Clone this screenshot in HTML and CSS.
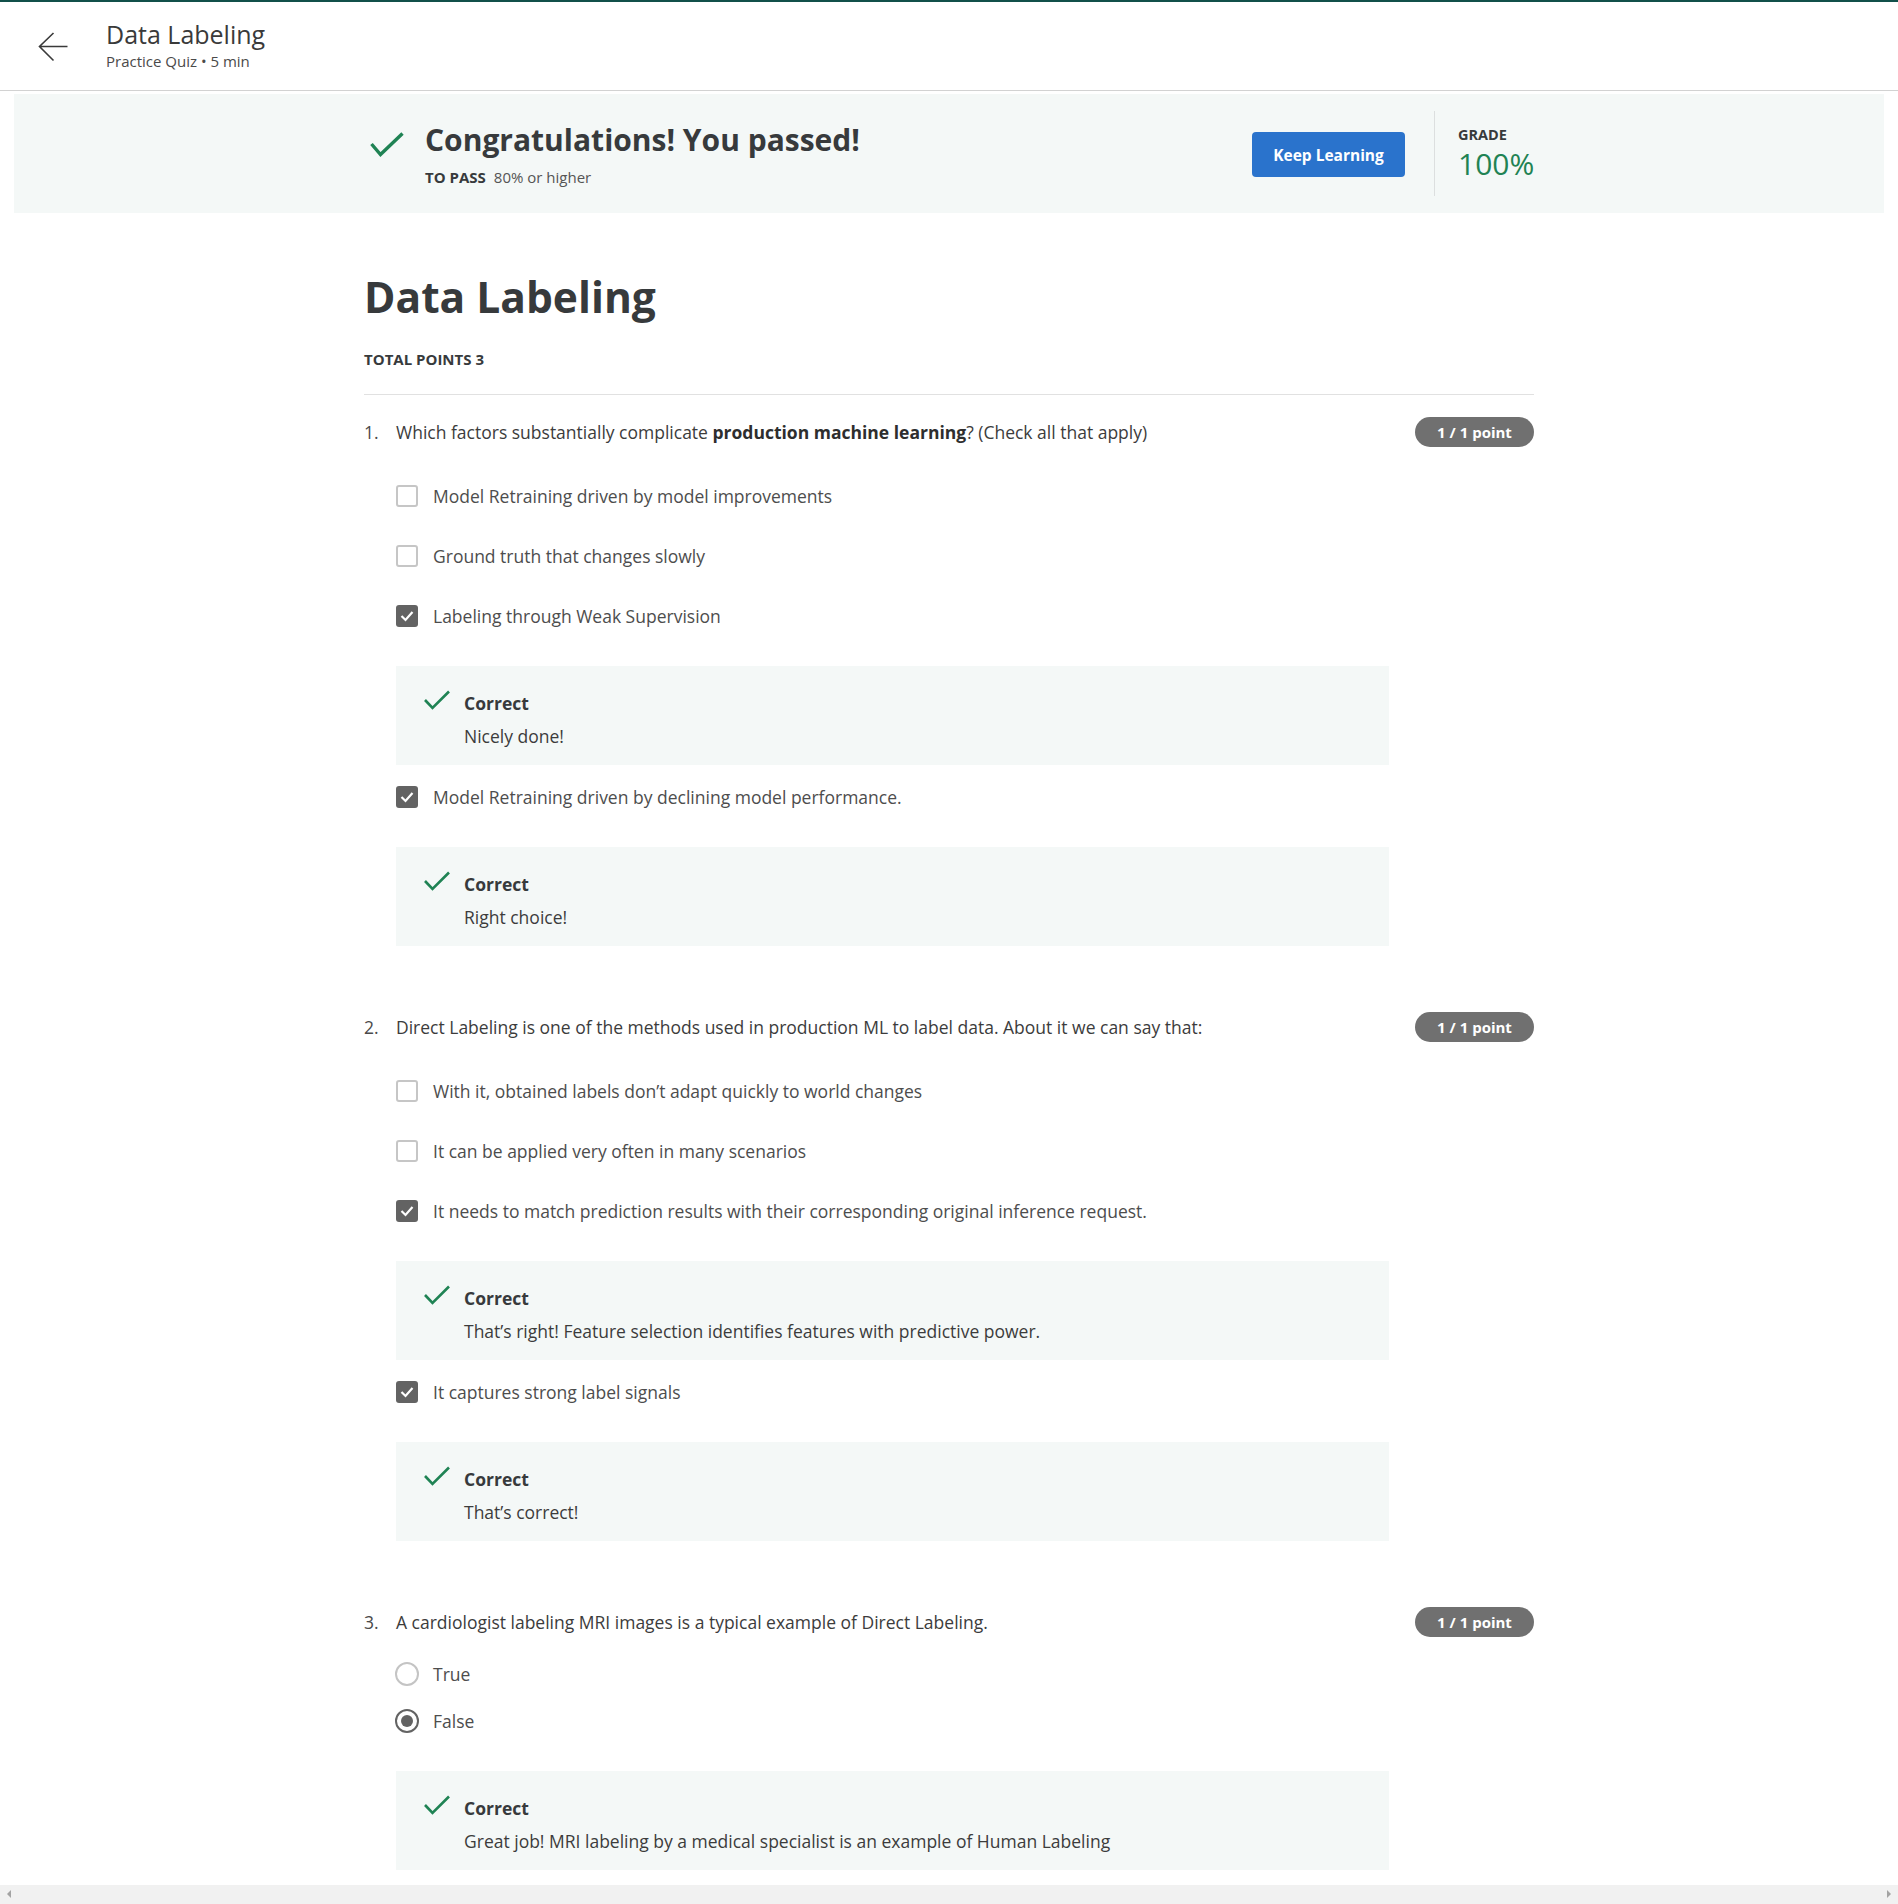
FILE: index.html
```html
<!DOCTYPE html>
<html lang="en">
<head>
<meta charset="utf-8">
<title>Data Labeling</title>
<link rel="stylesheet" href="styles.css">
</head>
<body>
<div class="topline"></div>
<header class="header">
  <svg class="back" width="30" height="30" viewBox="0 0 30 30"><path d="M29.5 14.5H1.5M15.5 1L1.5 14.5L15.5 28.5" fill="none" stroke="#3a3a3a" stroke-width="1.6"/></svg>
  <div class="hdr-text">
    <div class="hdr-title">Data Labeling</div>
    <div class="hdr-sub">Practice Quiz • 5 min</div>
  </div>
</header>

<section class="banner">
  <div class="banner-inner">
    <div class="pass">
      <svg class="pass-check" width="34" height="25" viewBox="0 0 34 25"><polyline points="1.5,12 10.5,22.5 32.5,1.5" fill="none" stroke="#1f8354" stroke-width="3.4"/></svg>
      <div>
        <div class="pass-title">Congratulations! You passed!</div>
        <div class="pass-sub"><b>TO PASS</b><span>80% or higher</span></div>
      </div>
    </div>
    <button class="keep">Keep Learning</button>
    <div class="vdiv"></div>
    <div class="grade">
      <div class="grade-label">GRADE</div>
      <div class="grade-val">100%</div>
    </div>
  </div>
</section>

<main class="quiz">
  <h1 class="quiz-title">Data Labeling</h1>
  <div class="total">TOTAL POINTS 3</div>

  <div class="questions">
    <div class="question">
      <div class="q-head">
        <div class="q-num">1.</div>
        <div class="q-text">Which factors substantially complicate <b>production machine learning</b>? (Check all that apply)</div>
        <div class="pill">1 / 1 point</div>
      </div>
      <div class="q-body checks">
        <div class="option"><span class="cb"></span><span class="opt-text">Model Retraining driven by model improvements</span></div>
        <div class="option"><span class="cb"></span><span class="opt-text">Ground truth that changes slowly</span></div>
        <div class="option"><span class="cb on"><svg width="22" height="22" viewBox="0 0 22 22"><polyline points="5.5,11 9.5,15 16.5,7" fill="none" stroke="#fff" stroke-width="2.2"/></svg></span><span class="opt-text">Labeling through Weak Supervision</span></div>
        <div class="feedback">
          <svg class="fb-check" width="26" height="20" viewBox="0 0 26 20"><polyline points="1,10 8.5,18 25,1.5" fill="none" stroke="#1f8354" stroke-width="2.6"/></svg>
          <div><div class="fb-title">Correct</div><div class="fb-text">Nicely done!</div></div>
        </div>
        <div class="option"><span class="cb on"><svg width="22" height="22" viewBox="0 0 22 22"><polyline points="5.5,11 9.5,15 16.5,7" fill="none" stroke="#fff" stroke-width="2.2"/></svg></span><span class="opt-text">Model Retraining driven by declining model performance.</span></div>
        <div class="feedback">
          <svg class="fb-check" width="26" height="20" viewBox="0 0 26 20"><polyline points="1,10 8.5,18 25,1.5" fill="none" stroke="#1f8354" stroke-width="2.6"/></svg>
          <div><div class="fb-title">Correct</div><div class="fb-text">Right choice!</div></div>
        </div>
      </div>
    </div>

    <div class="question">
      <div class="q-head">
        <div class="q-num">2.</div>
        <div class="q-text">Direct Labeling is one of the methods used in production ML to label data. About it we can say that:</div>
        <div class="pill">1 / 1 point</div>
      </div>
      <div class="q-body checks">
        <div class="option"><span class="cb"></span><span class="opt-text">With it, obtained labels don’t adapt quickly to world changes</span></div>
        <div class="option"><span class="cb"></span><span class="opt-text">It can be applied very often in many scenarios</span></div>
        <div class="option"><span class="cb on"><svg width="22" height="22" viewBox="0 0 22 22"><polyline points="5.5,11 9.5,15 16.5,7" fill="none" stroke="#fff" stroke-width="2.2"/></svg></span><span class="opt-text">It needs to match prediction results with their corresponding original inference request.</span></div>
        <div class="feedback">
          <svg class="fb-check" width="26" height="20" viewBox="0 0 26 20"><polyline points="1,10 8.5,18 25,1.5" fill="none" stroke="#1f8354" stroke-width="2.6"/></svg>
          <div><div class="fb-title">Correct</div><div class="fb-text">That’s right! Feature selection identifies features with predictive power.</div></div>
        </div>
        <div class="option"><span class="cb on"><svg width="22" height="22" viewBox="0 0 22 22"><polyline points="5.5,11 9.5,15 16.5,7" fill="none" stroke="#fff" stroke-width="2.2"/></svg></span><span class="opt-text">It captures strong label signals</span></div>
        <div class="feedback">
          <svg class="fb-check" width="26" height="20" viewBox="0 0 26 20"><polyline points="1,10 8.5,18 25,1.5" fill="none" stroke="#1f8354" stroke-width="2.6"/></svg>
          <div><div class="fb-title">Correct</div><div class="fb-text">That’s correct!</div></div>
        </div>
      </div>
    </div>

    <div class="question last">
      <div class="q-head">
        <div class="q-num">3.</div>
        <div class="q-text">A cardiologist labeling MRI images is a typical example of Direct Labeling.</div>
        <div class="pill">1 / 1 point</div>
      </div>
      <div class="q-body radios">
        <div class="option"><span class="rb"></span><span class="opt-text">True</span></div>
        <div class="option"><span class="rb on"></span><span class="opt-text">False</span></div>
        <div class="feedback">
          <svg class="fb-check" width="26" height="20" viewBox="0 0 26 20"><polyline points="1,10 8.5,18 25,1.5" fill="none" stroke="#1f8354" stroke-width="2.6"/></svg>
          <div><div class="fb-title">Correct</div><div class="fb-text">Great job! MRI labeling by a medical specialist is an example of Human Labeling</div></div>
        </div>
      </div>
    </div>
  </div>
</main>

<div class="hscroll"><span class="arr left"></span><span class="arr right"></span></div>
</body>
</html>
```

FILE: styles.css
```css
* { box-sizing: border-box; }
html, body { margin: 0; padding: 0; }
body {
  font-family: "Open Sans", "DejaVu Sans", sans-serif;
  color: #3c3c3c;
  background: #fff;
  font-size: 17.5px;
  line-height: 24px;
}

.topline { height: 2px; background: #11504a; }

.header {
  height: 89px;
  border-bottom: 1px solid #d2d2d2;
  display: flex;
  align-items: flex-start;
  padding: 16px 0 0 38px;
}
.back { margin-top: 14px; flex: none; }
.hdr-text { margin-left: 38px; }
.hdr-title { font-size: 25px; line-height: 33px; color: #3a3a3a; }
.hdr-sub { font-size: 15px; line-height: 21px; color: #4a4a4a; }

.banner {
  margin: 3px 14px 0;
  height: 119px;
  background: #f4f8f7;
  display: flex;
  align-items: center;
}
.banner-inner {
  width: 1170px;
  margin: 0 auto;
  display: flex;
  align-items: center;
}
.pass { display: flex; align-items: flex-start; }
.pass-check { margin: 12px 21px 0 6px; flex: none; }
.pass-title { font-size: 30px; line-height: 40px; font-weight: 700; color: #373a3c; }
.pass-sub { margin-top: 7px; font-size: 15px; line-height: 20px; color: #555; }
.pass-sub b { color: #373a3c; margin-right: 8px; }

.keep {
  margin-left: auto;
  width: 153px;
  height: 45px;
  border: none;
  border-radius: 4px;
  background: #2a73cc;
  color: #fff;
  font-family: "Open Sans", sans-serif;
  font-size: 15.5px;
  font-weight: 700;
  padding: 0;
  margin-top: 2px;
}
.vdiv { width: 1px; height: 85px; background: #dcdfdf; margin: 0 23px 0 29px; }
.grade { width: 76px; }
.grade-label { font-size: 14.5px; line-height: 20px; font-weight: 700; color: #373a3c; }
.grade-val { font-size: 30px; line-height: 36px; color: #1f8354; margin-top: 1px; }

.quiz { width: 1170px; margin: 58px auto 0; }
.quiz-title { margin: 0 0 26px; font-size: 42.5px; line-height: 52px; font-weight: 700; color: #373a3c; }
.total {
  font-size: 15px; line-height: 20px; font-weight: 700; color: #373a3c;
  padding-bottom: 25px;
  border-bottom: 1px solid #e1e1e1;
}
.questions { padding-top: 22px; }

.question { margin-bottom: 66px; }
.question.last { margin-bottom: 0; }
.q-head { display: flex; align-items: center; height: 30px; margin-bottom: 23px; }
.q-num { width: 32px; flex: none; color: #4a4a4a; }
.q-text { flex: 1; color: #3c3c3c; }
.q-text b { color: #2e2e2e; }
.pill {
  flex: none;
  width: 119px;
  height: 30px;
  border-radius: 15px;
  background: #707070;
  color: #fff;
  font-size: 15px;
  font-weight: 700;
  line-height: 30px;
  text-align: center;
}

.q-body { margin-left: 32px; }
.q-body.checks { padding-top: 14px; }
.q-body.radios { padding-top: 2px; }
.option { display: flex; align-items: center; height: 24px; }
.checks .option { margin-bottom: 36px; }
.radios .option { margin-bottom: 23px; }
.opt-text { color: #4d4d4d; }

.cb {
  width: 22px; height: 22px; flex: none;
  border: 2px solid #c6c6c6; border-radius: 3px;
  margin-right: 15px;
  background: #fff;
}
.cb.on { border: none; background: #636363; }
.cb svg { display: block; }

.rb {
  width: 24px; height: 24px; flex: none;
  border: 2px solid #c4c4c4; border-radius: 50%;
  margin-left: -1px; margin-right: 14px;
  display: flex; align-items: center; justify-content: center;
}
.rb.on { border: 2.5px solid #636363; }
.rb.on::after { content: ""; width: 12px; height: 12px; border-radius: 50%; background: #636363; }

.feedback {
  margin: 38px 0 20px 0;
  width: 993px;
  background: #f4f8f7;
  display: flex;
  align-items: flex-start;
  padding: 25px 20px 17px 28px;
}
.fb-check { flex: none; margin: -1px 14px 0 0; }
.fb-title { font-weight: 700; color: #373a3c; margin-bottom: 9px; }
.fb-text { color: #3c3c3c; }

.hscroll {
  position: fixed; left: 0; right: 0; bottom: 0;
  height: 19px; background: #f1f1f1;
}
.arr { position: absolute; top: 5px; width: 0; height: 0; border-top: 4px solid transparent; border-bottom: 4px solid transparent; }
.arr.left { left: 7px; border-right: 4px solid #a3a3a3; }
.arr.right { right: 7px; border-left: 4px solid #a3a3a3; }
```
